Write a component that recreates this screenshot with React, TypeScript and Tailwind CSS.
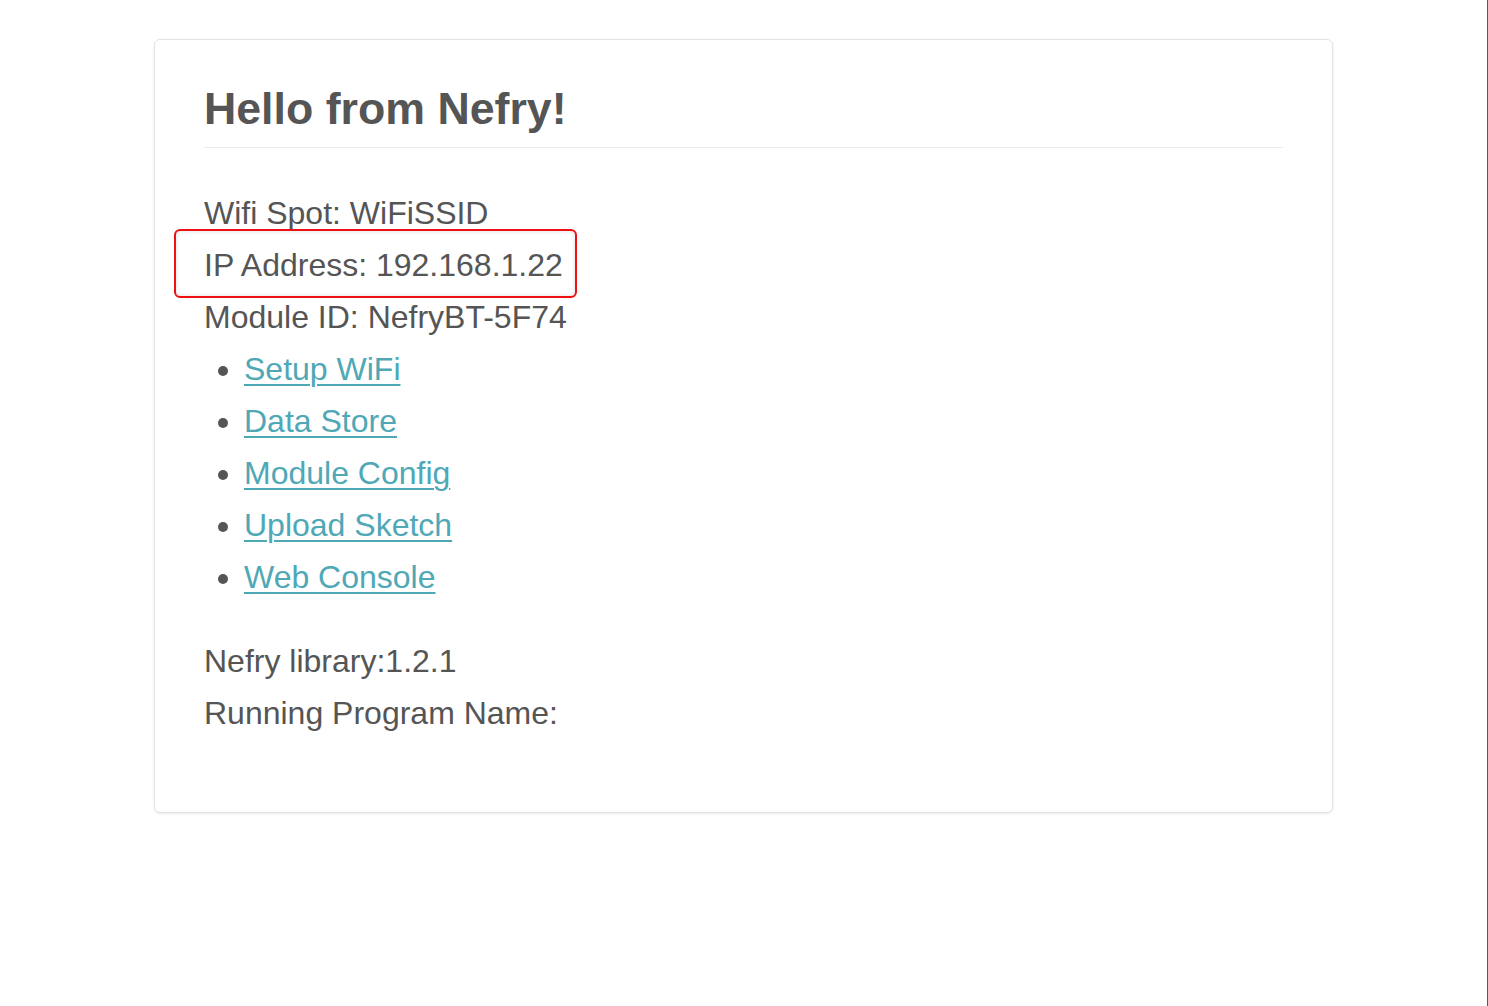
import React from 'react';

const links = ['Setup WiFi', 'Data Store', 'Module Config', 'Upload Sketch', 'Web Console'];

export default function App() {
  return (
    <div className="min-h-screen w-[1488px] bg-white border-r border-[#5a5a5a] pt-[39px] font-['Liberation_Sans',Arial,sans-serif] text-[#555555]">
      <div className="mx-auto w-[1179px] rounded-md border border-[#e3e3e3] bg-white px-[49px] pt-[43px] pb-[73px] shadow-[0_1px_3px_rgba(0,0,0,0.08)]">
        <h1 className="border-b border-[#ececec] pb-[12px] text-[44.7px] font-bold leading-[52px]">
          Hello from Nefry!
        </h1>

        <div className="mt-[39px] text-[32px] leading-[52px]">
          <p>Wifi Spot: WiFiSSID</p>
          <div className="relative">
            <p>IP Address: 192.168.1.22</p>
            <div className="absolute left-[-30px] top-[-10px] h-[69px] w-[403px] rounded-md border-2 border-[#ee1111] shadow-[inset_0_0_4px_rgba(0,0,0,0.15)]" />
          </div>
          <p>Module ID: NefryBT-5F74</p>

          <ul className="list-disc pl-[40px] marker:text-[#555555]">
            {links.map((l) => (
              <li key={l}>
                <a href="#" className="text-[#4fa8b6] underline decoration-[2px] underline-offset-[4px]">
                  {l}
                </a>
              </li>
            ))}
          </ul>

          <p className="mt-[32px]">Nefry library:1.2.1</p>
          <p>Running Program Name:</p>
        </div>
      </div>
    </div>
  );
}
